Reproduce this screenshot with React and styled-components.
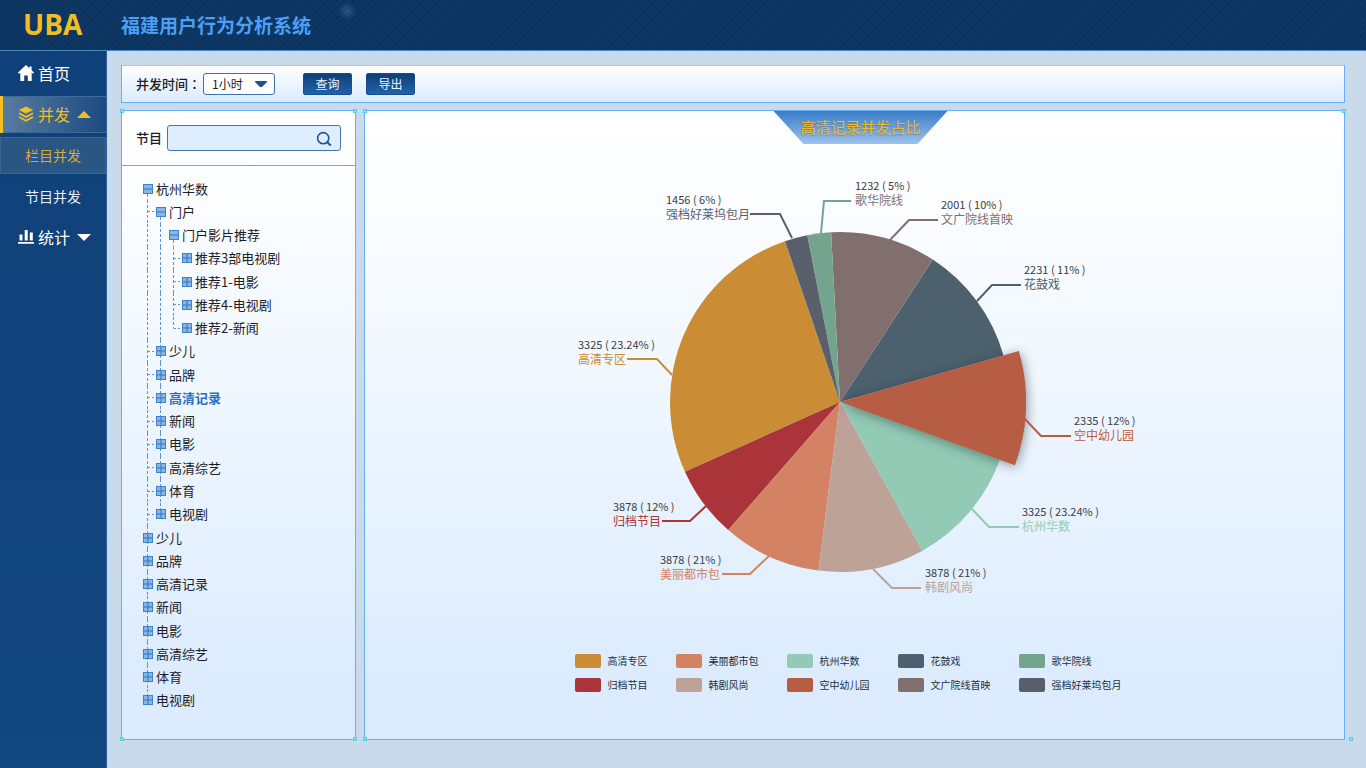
import React from "react";
import styled, { createGlobalStyle, css } from "styled-components";

const GlobalStyle = createGlobalStyle`
  *, *::before, *::after { box-sizing: border-box; }
  body {
    margin: 0;
    font-family: "Noto Sans CJK SC", "Noto Sans", sans-serif;
    font-size: 13px;
    color: #1c2026;
    background: #c9daea;
  }
  a { color: inherit; text-decoration: none; }
  ul { list-style: none; margin: 0; padding: 0; }
  button, input, select { font-family: inherit; }
`;

const Page = styled.div`
  display: flex;
  flex-direction: column;
  min-height: 100vh;
`;

const Header = styled.header`
  display: flex;
  align-items: center;
  height: 51px;
  border-bottom: 1px solid #4c86c2;
  background:
    radial-gradient(circle at 347px 11px, rgba(110, 160, 210, 0.3), transparent 9px),
    repeating-linear-gradient(135deg, #0e3863 0 3px, #0b3059 3px 4px);
`;

const Logo = styled.a`
  width: 121px;
  padding-left: 23px;
  font-family: "Open Sans", "Noto Sans", sans-serif;
  font-size: 28px;
  font-weight: 700;
  line-height: 48px;
  padding-bottom: 2px;
  color: #f0bd26;
`;

const SystemName = styled.h1`
  margin: 0;
  font-size: 19px;
  font-weight: 700;
  line-height: 50px;
  color: #4b9ff5;
`;

const Body = styled.div`
  display: flex;
  flex: 1;
`;

const Sidebar = styled.nav`
  flex: none;
  width: 107px;
  background: linear-gradient(#0f4079, #13477f);
  border-right: 1px solid #2b5f97;
`;

const NavItem = styled.a`
  display: flex;
  align-items: center;
  height: ${(p) => (p.$tall ? 45 : 37)}px;
  padding-left: 18px;
  padding-bottom: 1px;
  font-size: 16px;
  color: ${(p) => (p.$active ? "#f0bd26" : "#fff")};
  ${(p) =>
    p.$active &&
    css`
      padding-left: 15px;
      border-left: 3px solid #f6c022;
      background: linear-gradient(90deg, #587ba0, #1b4b81);
      box-shadow: inset 0 1px #3f6b99, inset 0 -1px #3f6b99;
    `}
  svg:first-child { margin-right: 4px; }
  svg:last-child:not(:first-child) { margin-left: 7px; }
`;

const SubItem = styled.a`
  display: flex;
  align-items: center;
  justify-content: center;
  height: ${(p) => (p.$active ? 37 : 45)}px;
  margin-top: ${(p) => (p.$active ? 4 : 0)}px;
  padding-bottom: 1px;
  font-size: 14px;
  color: ${(p) => (p.$active ? "#dba92f" : "#e8eef5")};
  ${(p) =>
    p.$active &&
    css`
      background: #2a5684;
      box-shadow: inset 0 0 0 1px #3b658f;
    `}
`;

const Main = styled.main`
  flex: 1;
  min-width: 0;
  display: flex;
  flex-direction: column;
  gap: 7px;
  padding: 14px 21px 28px 14px;
`;

const FilterBar = styled.form`
  display: flex;
  align-items: center;
  height: 38px;
  padding: 0 14px;
  border: 1px solid #66aef8;
  border-top-color: #9cc7f0;
  background: linear-gradient(#fff, #d9ebfe);
`;

const FieldLabel = styled.label`
  padding-bottom: 2px;
  font-size: 13px;
  font-weight: 500;
  white-space: nowrap;
`;

const Colon = styled.span`
  font-family: "Noto Sans CJK TC", sans-serif;
`;

const SelectBox = styled.div`
  position: relative;
  width: 72px;
  margin: 0 28px 0 2px;
  svg {
    position: absolute;
    right: 8px;
    top: 8px;
    pointer-events: none;
  }
`;

const Select = styled.select`
  display: block;
  width: 100%;
  height: 22px;
  padding: 0 8px 2px;
  appearance: none;
  border: 1px solid #3f70a9;
  border-radius: 3px;
  background: #fff;
  font-size: 12px;
  color: #1c2026;
`;

const Button = styled.button`
  width: 49px;
  height: 22px;
  margin-right: 14px;
  padding: 0;
  border: 1px solid #174d8b;
  border-radius: 2px;
  background: linear-gradient(#0e3f77, #2063ab);
  font-size: 12px;
  line-height: 20px;
  color: #eef5fd;
`;

const Panels = styled.div`
  flex: 1;
  display: flex;
  gap: 8px;
`;

const Panel = styled.section`
  position: relative;
  display: flex;
  flex-direction: column;
  border: 1px solid #66aef8;
  background: linear-gradient(#fff, #f9fcff 20%, #dcecfe 90%);
`;

const TreePanel = styled(Panel)`
  flex: none;
  width: 235px;
`;

const ChartPanel = styled(Panel)`
  flex: 1;
  min-width: 0;
  align-items: center;
`;

const Corner = styled.i`
  position: absolute;
  width: 4px;
  height: 4px;
  border: 1px solid #4bd0ee;
  background: #8ce0f3;
  ${(p) => (p.$bottom ? "bottom: -2px;" : "top: -2px;")}
  ${(p) => (p.$right ? `right: ${p.$outside ? -9 : -2}px;` : "left: -2px;")}
`;

const SearchRow = styled.form`
  display: flex;
  align-items: center;
  gap: 5px;
  height: 55px;
  padding: 0 14px;
  border-bottom: 1px solid #6bacf0;
`;

const SearchBox = styled.div`
  position: relative;
  flex: 1;
`;

const SearchInput = styled.input`
  display: block;
  width: 100%;
  height: 26px;
  padding: 0 32px 0 8px;
  border: 1px solid #4275b2;
  border-radius: 3px;
  background: #deeeff;
  font-size: 13px;
`;

const SearchButton = styled.button`
  position: absolute;
  right: 9px;
  top: 6px;
  width: 16px;
  height: 16px;
  padding: 0;
  border: 0;
  background: none;
  svg { display: block; }
`;

const Tree = styled.ul`
  flex: 1;
  display: grid;
  grid-auto-rows: minmax(23px, 1fr);
  margin: 11px 21px 27px;
`;

const TreeRow = styled.li`
  display: flex;
  align-items: stretch;
`;

const V = "repeating-linear-gradient(#5c96d6 0 3px, transparent 3px 5px)";
const H = "repeating-linear-gradient(90deg, #5c96d6 0 2px, transparent 2px 4px)";

const Guide = styled.span`
  display: flex;
  align-items: center;
  width: 13px;
  background-repeat: no-repeat;
  background-image: ${(p) => (p.$elbow ? `${V}, ${H}` : V)};
  background-size: 1px ${(p) => (p.$half ? "50%" : "100%")}, 8px 1px;
  background-position: 4px ${(p) => (p.$half === "below" ? "100%" : "0")}, 5px 50%;
  ${(p) => p.$none && "background-image: none;"}
`;

const Toggle = styled.button`
  width: 10px;
  height: 10px;
  padding: 0;
  border: 0;
  background: none;
  svg { display: block; }
`;

const TreeLink = styled.a`
  align-self: center;
  font-size: 13px;
  line-height: 20px;
  white-space: nowrap;
  ${(p) =>
    p.$selected &&
    css`
      font-weight: 700;
      color: #2a70c0;
    `}
`;

const TitleBar = styled.div`
  padding-left: 12px;
`;

const ChartTitle = styled.h2`
  width: 174px;
  height: 33px;
  margin: 0;
  clip-path: polygon(0 0, 100% 0, calc(100% - 30px) 100%, 30px 100%);
  background: linear-gradient(#397cc7, #9cc2ec);
  font-size: 15px;
  font-weight: 400;
  line-height: 31px;
  text-align: center;
  color: #edb92e;
  text-shadow: 0 1px 1px rgba(110, 100, 60, 0.5);
`;

const Figure = styled.figure`
  width: 560px;
  margin: 26px 0 0;
`;

const Chart = styled.svg`
  display: block;
  width: 100%;
  overflow: visible;
`;

const Raised = styled.path`
  filter: drop-shadow(1px 2px 6px rgba(20, 35, 40, 0.45));
`;

const ValueText = styled.text`
  font-size: 11px;
  fill: #3a3d42;
`;

const NameText = styled.text`
  font-size: 12px;
`;

const Legend = styled.ul`
  display: grid;
  grid-auto-flow: column;
  grid-template-rows: repeat(2, 14px);
  justify-content: start;
  gap: 10px 28px;
  margin-top: 54px;
`;

const LegendItem = styled.li`
  display: flex;
  align-items: center;
  gap: 7px;
  font-size: 10px;
  line-height: 14px;
  color: #25303b;
`;

const Swatch = styled.span`
  width: 26px;
  height: 14px;
  border-radius: 2px;
  background: ${(p) => p.$color};
`;

const HomeIcon = () => (
  <svg width="16" height="16" viewBox="0 0 16 16" fill="currentColor" aria-hidden="true">
    <path d="M8 0 0 7.6l1 1.2 1.3-1V16h3.9v-5.4h3.6V16h3.9V7.8l1.3 1 1-1.2-2.4-2.3V1.6h-2.2v1.6z" />
  </svg>
);

const LayersIcon = () => (
  <svg width="16" height="16" viewBox="0 0 16 16" fill="none" stroke="currentColor" aria-hidden="true">
    <path d="M8 .4 15.2 4 8 7.6.8 4z" fill="currentColor" stroke="none" />
    <path d="M1 7.3 8 11l7-3.7M1 11l7 3.7 7-3.7" strokeWidth="1.7" />
  </svg>
);

const BarsIcon = () => (
  <svg width="16" height="16" viewBox="0 0 16 16" fill="currentColor" aria-hidden="true">
    <path d="M1.5 5.5h3v6h-3zM6.7 1h3v10.500h-3zM11.800 3.500h3v8h-3zM0 13h16v1.800H0z" />
  </svg>
);

const Triangle = ({ up, w = 14, h = 7 }) => (
  <svg width={w} height={h} viewBox="0 0 14 7" preserveAspectRatio="none" fill="currentColor" aria-hidden="true">
    <path d={up ? "M0 7 7 0l7 7z" : "M0 0h14L7 7z"} />
  </svg>
);

const SearchIcon = () => (
  <svg width="16" height="16" viewBox="0 0 16 16" fill="none" stroke="#1f5592" strokeWidth="1.600" aria-hidden="true">
    <circle cx="7.200" cy="7.200" r="5.600" />
    <path d="m11.200 11.200 3.600 3.400" strokeWidth="2" />
  </svg>
);

const BoxIcon = ({ open }) => (
  <svg width="10" height="10" viewBox="0 0 10 10" aria-hidden="true">
    <rect x=".5" y=".5" width="9" height="9" fill="#8ab6e6" stroke="#3f82cc" />
    <path d={open ? "M1 5h8" : "M1 5h8M5 1v8"} stroke="#2f74c2" />
  </svg>
);

// own: which part of the dashed line runs through the node's own column
const tree = [
  { name: "杭州华数", level: 0, open: true, own: "below" },
  { name: "门户", level: 1, open: true, own: "below" },
  { name: "门户影片推荐", level: 2, open: true, own: "below", plain: true },
  { name: "推荐3部电视剧", level: 3 },
  { name: "推荐1-电影", level: 3 },
  { name: "推荐4-电视剧", level: 3 },
  { name: "推荐2-新闻", level: 3, end: true },
  ...["少儿", "品牌", "高清记录", "新闻", "电影", "高清综艺", "体育"].map((name) => ({
    name,
    level: 1,
    own: "full",
    selected: name === "高清记录",
  })),
  { name: "电视剧", level: 1, own: "above" },
  ...["少儿", "品牌", "高清记录", "新闻", "电影", "高清综艺", "体育"].map((name) => ({
    name,
    level: 0,
    own: "full",
  })),
  { name: "电视剧", level: 0, own: "above" },
];

// Angles run clockwise in degrees from twelve o'clock; points are relative to the pie's centre.
const slices = [
  { name: "高清专区", value: "3325 ( 23.24% )", color: "#ca8c34", from: 245.8, to: 341.1, line: "-168,-27 -183,-43 -213,-43", x: -262, y: -42 },
  { name: "归档节目", value: "3878 ( 12% )", color: "#aa3439", from: 221.1, to: 245.8, line: "-134,104 -150,119 -178,119", x: -227, y: 120 },
  { name: "美丽都市包", value: "3878 ( 21% )", color: "#d38264", from: 187.3, to: 221.1, line: "-71,154 -90,172 -118,172", x: -180, y: 173 },
  { name: "韩剧风尚", value: "3878 ( 21% )", color: "#bda298", from: 151, to: 187.3, line: "33,167 52,186 81,186", x: 85, y: 186 },
  { name: "杭州华数", value: "3325 ( 23.24% )", color: "#93cab5", from: 109.9, to: 151, line: "132,107 149,125 179,125", x: 182, y: 125 },
  { name: "空中幼儿园", value: "2335 ( 12% )", color: "#b65d43", from: 74.1, to: 109.9, line: "184,16 201,34 231,34", x: 234, y: 34, raised: true },
  { name: "花鼓戏", value: "2231 ( 11% )", color: "#4d606e", from: 33.1, to: 74.1, line: "137,-101 152,-117 181,-117", x: 184, y: -117 },
  { name: "文广院线首映", value: "2001 ( 10% )", color: "#816f6e", from: -3, to: 33.1, line: "50,-162 69,-182 98,-182", x: 101, y: -182 },
  { name: "歌华院线", value: "1232 ( 5% )", color: "#75a48e", text: "#816f6e", from: 348.9, to: 357, line: "-19,-169 -16,-201 11,-201", x: 15, y: -201 },
  { name: "强档好莱坞包月", value: "1456 ( 6% )", color: "#5a606b", from: 341.1, to: 348.9, line: "-48,-164 -60,-188 -90,-188", x: -174, y: -187 },
];

const point = (deg, r) => {
  const a = (deg * Math.PI) / 180;
  return `${(Math.sin(a) * r).toFixed(2)} ${(-Math.cos(a) * r).toFixed(2)}`;
};

const sector = ({ from, to }, r) => `M0 0L${point(from, r)}A${r} ${r} 0 0 1 ${point(to, r)}Z`;

function TreeNode({ node }) {
  const { name, level, open, own, plain, end, selected } = node;
  return (
    <TreeRow role="treeitem" aria-level={level + 1} aria-expanded={!!open} aria-selected={!!selected}>
      {Array.from({ length: level }, (_, i) => {
        const last = i === level - 1;
        return <Guide key={i} $elbow={last && !plain} $half={last && end ? "above" : undefined} />;
      })}
      <Guide $none={!own} $half={own === "full" ? undefined : own}>
        <Toggle type="button" aria-label={open ? "收起" : "展开"}>
          <BoxIcon open={open} />
        </Toggle>
      </Guide>
      <TreeLink href="#" $selected={selected}>{name}</TreeLink>
    </TreeRow>
  );
}

function PieChart() {
  const flat = slices.filter((s) => !s.raised);
  const raised = slices.filter((s) => s.raised);
  return (
    <Chart viewBox="-265 -232 560 430" role="img" aria-label="高清记录并发占比">
      {flat.map((s) => (
        <path key={s.name} d={sector(s, 170)} fill={s.color} />
      ))}
      {raised.map((s) => (
        <Raised key={s.name} d={sector(s, 186)} fill={s.color} />
      ))}
      {slices.map((s) => (
        <g key={s.name}>
          <polyline points={s.line} fill="none" stroke={s.color} strokeWidth="2" />
          <ValueText x={s.x} y={s.y - 11}>{s.value}</ValueText>
          <NameText x={s.x} y={s.y + 4} fill={s.text || s.color}>{s.name}</NameText>
        </g>
      ))}
    </Chart>
  );
}

const legendOrder = [
  "高清专区", "归档节目", "美丽都市包", "韩剧风尚", "杭州华数",
  "空中幼儿园", "花鼓戏", "文广院线首映", "歌华院线", "强档好莱坞包月",
];

const stop = (e) => e.preventDefault();

export default function App() {
  return (
    <Page>
      <GlobalStyle />
      <Header>
        <Logo href="#">UBA</Logo>
        <SystemName>福建用户行为分析系统</SystemName>
      </Header>
      <Body>
        <Sidebar>
          <NavItem href="#" $tall><HomeIcon />首页</NavItem>
          <NavItem href="#" $active><LayersIcon />并发<Triangle up /></NavItem>
          <SubItem href="#" $active>栏目并发</SubItem>
          <SubItem href="#">节目并发</SubItem>
          <NavItem href="#"><BarsIcon />统计<Triangle /></NavItem>
        </Sidebar>
        <Main>
          <FilterBar onSubmit={stop}>
            <FieldLabel htmlFor="period">并发时间<Colon>：</Colon></FieldLabel>
            <SelectBox>
              <Select id="period" defaultValue="1">
                <option value="1">1小时</option>
              </Select>
              <svg width="12" height="6" viewBox="0 0 12 6" fill="#1d5391" aria-hidden="true">
                <path d="M0 0h12v1L7 6H5L0 1z" />
              </svg>
            </SelectBox>
            <Button type="submit">查询</Button>
            <Button type="button">导出</Button>
          </FilterBar>
          <Panels>
            <TreePanel>
              <SearchRow onSubmit={stop}>
                <FieldLabel htmlFor="program">节目</FieldLabel>
                <SearchBox>
                  <SearchInput id="program" type="text" />
                  <SearchButton type="submit" aria-label="搜索"><SearchIcon /></SearchButton>
                </SearchBox>
              </SearchRow>
              <Tree role="tree">
                {tree.map((node, i) => <TreeNode key={i} node={node} />)}
              </Tree>
              <Corner />
              <Corner $right />
              <Corner $bottom />
              <Corner $bottom $right />
            </TreePanel>
            <ChartPanel>
              <TitleBar>
                <ChartTitle>高清记录并发占比</ChartTitle>
              </TitleBar>
              <Figure>
                <PieChart />
                <Legend>
                  {legendOrder.map((name) => (
                    <LegendItem key={name}>
                      <Swatch $color={slices.find((s) => s.name === name).color} />
                      {name}
                    </LegendItem>
                  ))}
                </Legend>
              </Figure>
              <Corner />
              <Corner $right />
              <Corner $bottom />
              <Corner $bottom $right $outside />
            </ChartPanel>
          </Panels>
        </Main>
      </Body>
    </Page>
  );
}
